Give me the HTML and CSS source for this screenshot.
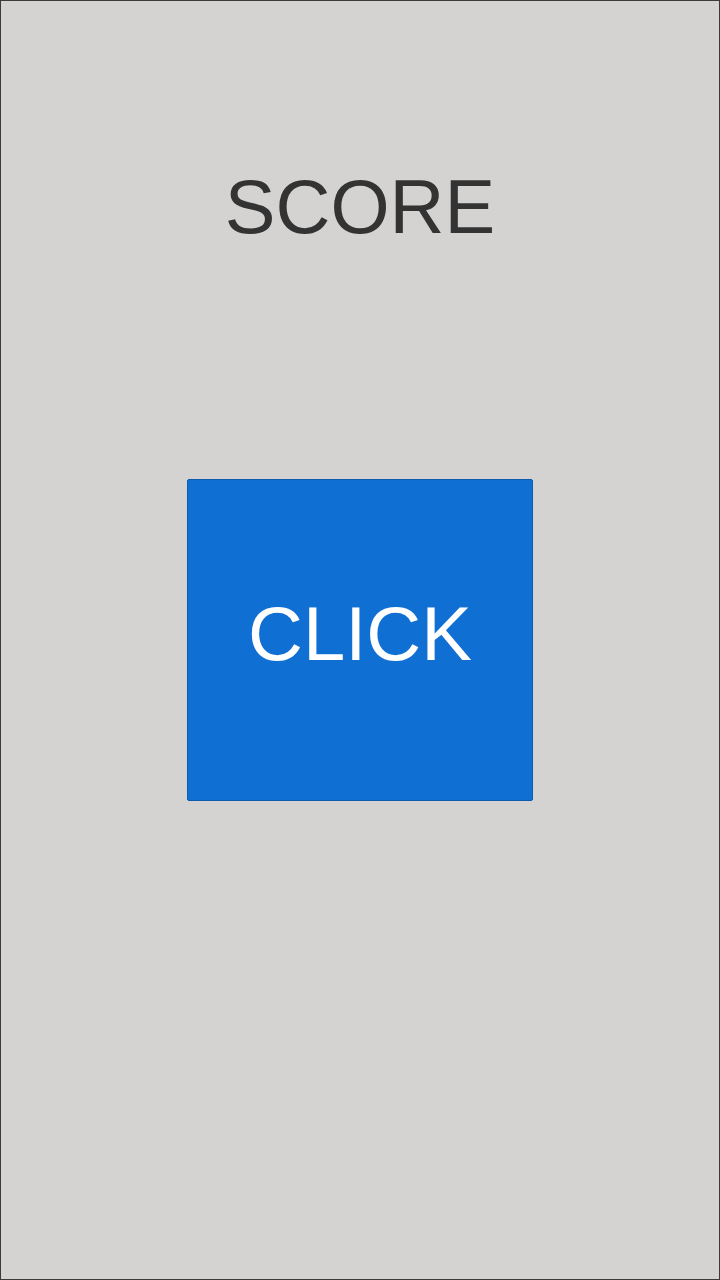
FILE: index.html
```html
<!DOCTYPE html>
<html>
<head>
<meta charset="utf-8">
<link rel="stylesheet" href="styles.css">
</head>
<body>
<div class="screen">
  <div class="score">SCORE</div>
  <button class="click">CLICK</button>
</div>
</body>
</html>
```
FILE: styles.css
```css
html, body {
  margin: 0;
  padding: 0;
}
body {
  width: 720px;
  height: 1280px;
  font-family: "Liberation Sans", Arial, sans-serif;
}
.screen {
  box-sizing: border-box;
  width: 720px;
  height: 1280px;
  border: 1px solid #3a3a3a;
  background: #d4d3d2;
  display: flex;
  flex-direction: column;
  align-items: center;
  padding-top: 163px;
}
.score {
  font-size: 76px;
  line-height: 86px;
  color: #333333;
}
.click {
  margin-top: 229px;
  width: 346px;
  height: 322px;
  box-sizing: border-box;
  background: #0f6fd2;
  border: 1px solid #0b5cae;
  border-radius: 2px;
  color: #ffffff;
  font-family: "Liberation Sans", Arial, sans-serif;
  font-size: 76px;
  line-height: 86px;
  padding: 0 0 12px 0;
  display: flex;
  align-items: center;
  justify-content: center;
}
```
